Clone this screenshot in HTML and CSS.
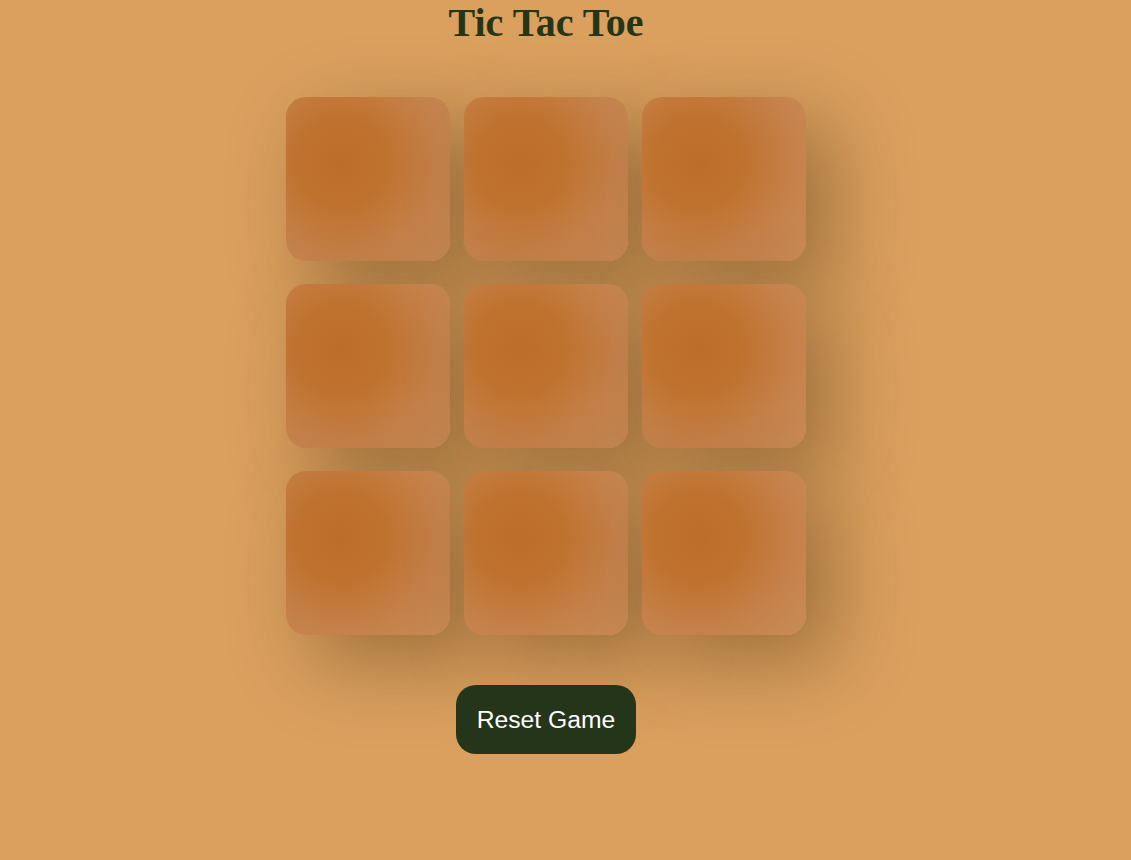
FILE: index.html
```html
<!DOCTYPE html>
<html>
<head>
<meta charset="utf-8">
<link rel="stylesheet" href="styles.css">
</head>
<body>
<main class="game">
  <h1 class="title">Tic Tac Toe</h1>
  <div class="board">
    <button class="cell"></button>
    <button class="cell"></button>
    <button class="cell"></button>
    <button class="cell"></button>
    <button class="cell"></button>
    <button class="cell"></button>
    <button class="cell"></button>
    <button class="cell"></button>
    <button class="cell"></button>
  </div>
  <button class="reset">Reset Game</button>
</main>
</body>
</html>
```
FILE: styles.css
```css
html, body {
  margin: 0;
  padding: 0;
  height: 100%;
}
body {
  background: #dba05e;
  font-family: "Liberation Serif", "Times New Roman", serif;
}
.game {
  display: flex;
  flex-direction: column;
  align-items: center;
  padding-right: 39px;
}
.title {
  margin: 0;
  font-size: 40px;
  font-weight: bold;
  line-height: 46px;
  color: #253518;
}
.board {
  margin-top: 51px;
  display: grid;
  grid-template-columns: repeat(3, 164px);
  grid-auto-rows: 164px;
  column-gap: 14px;
  row-gap: 23px;
}
.cell {
  border: none;
  padding: 0;
  border-radius: 20px;
  background: radial-gradient(circle at 34% 40%, #bd6d2a 0%, #bf722e 30%, #c5814a 65%, #c88a55 92%);
  box-shadow: 26px 26px 80px rgba(70, 45, 15, 0.42);
}
.reset {
  margin-top: 50px;
  width: 180px;
  height: 69px;
  border: none;
  border-radius: 20px;
  background: #253519;
  color: #ffffff;
  font-family: "Liberation Sans", Arial, sans-serif;
  font-size: 24.7px;
}
```
